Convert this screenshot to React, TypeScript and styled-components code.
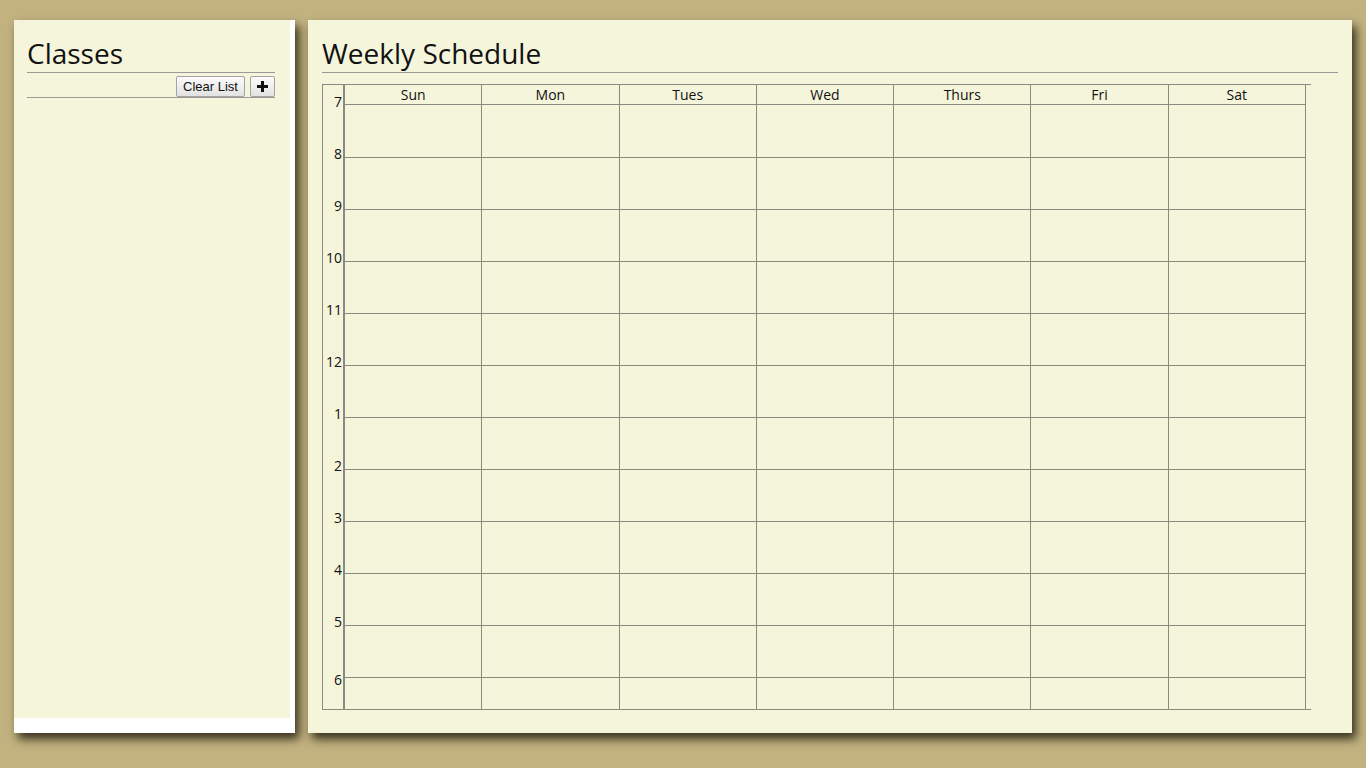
import React from "react";
import styled, { createGlobalStyle } from "styled-components";

const Global = createGlobalStyle`
  html, body { margin: 0; padding: 0; }
  body {
    background: #c2b280;
    font-family: "Open Sans", "Noto Sans", sans-serif;
    color: #111;
  }
`;

const Page = styled.div`
  display: flex;
  gap: 13px;
  padding: 20px 14px 35px 14px;
  height: 768px;
  box-sizing: border-box;
`;

const SidePanel = styled.aside`
  width: 281px;
  height: 713px;
  background: #ffffff;
  box-shadow: 4px 6px 9px rgba(20, 18, 5, 0.8);
  flex-shrink: 0;
`;

const SideInner = styled.div`
  display: flow-root;
  width: 276px;
  height: 698px;
  background: #f5f5dc;
  padding: 0 15px 0 13px;
  box-sizing: border-box;
`;

const MainPanel = styled.main`
  display: flow-root;
  flex: 1;
  height: 713px;
  background: #f5f5dc;
  box-shadow: 4px 6px 9px rgba(20, 18, 5, 0.8);
  padding: 0 14px;
  box-sizing: border-box;
`;

const Title = styled.h1`
  margin: 14px 0 0 0;
  font-family: "Open Sans", sans-serif;
  font-weight: 400;
  font-size: 28px;
  line-height: 38px;
  color: #111;
  border-bottom: 1px solid #999;
`;

const Toolbar = styled.div`
  display: flex;
  justify-content: flex-end;
  gap: 5px;
  padding-top: 3px;
  border-bottom: 1px solid #999;
`;

const Button = styled.button<{ $pad?: number }>`
  height: 21px;
  padding: 0 ${(p) => p.$pad ?? 6}px;
  font-family: "Liberation Sans", Arial, sans-serif;
  font-size: 13px;
  color: #111;
  background: linear-gradient(#fbfbfb, #e2e2e2);
  border: 1px solid #a3a3a3;
  border-radius: 2px;
  display: inline-flex;
  align-items: center;
  justify-content: center;
  cursor: pointer;
`;

const Schedule = styled.div`
  margin-top: 11px;
  width: 989px;
  height: 626px;
  box-sizing: border-box;
  display: flex;
  border-top: 1px solid #8a8a80;
  border-bottom: 1px solid #8a8a80;
  border-left: 1px solid #8a8a80;
  padding-right: 5px;
`;

const TimeCol = styled.div`
  width: 22px;
  flex-shrink: 0;
  border-right: 2px solid #8a8a80;
  padding-top: 7px;
  box-sizing: border-box;
`;

const TimeLabel = styled.div<{ $extra?: number }>`
  height: 52px;
  padding-top: ${(p) => p.$extra ?? 0}px;
  box-sizing: border-box;
  text-align: right;
  padding-right: 1px;
  font-size: 14px;
  line-height: 19px;
  color: #111;
`;

const Days = styled.div`
  flex: 1;
  display: flex;
`;

const DayCol = styled.div`
  flex: 1;
  min-width: 0;
  display: flex;
  flex-direction: column;
  border-right: 1px solid #8a8a80;
`;

const DayHead = styled.div`
  height: 20px;
  box-sizing: border-box;
  border-bottom: 1px solid #8a8a80;
  text-align: center;
  font-size: 14px;
  line-height: 19px;
  color: #111;
`;

const Slot = styled.div<{ $h: number; $last?: boolean }>`
  height: ${(p) => p.$h}px;
  box-sizing: border-box;
  border-bottom: ${(p) => (p.$last ? "none" : "1px solid #8a8a80")};
`;

const hours = ["7", "8", "9", "10", "11", "12", "1", "2", "3", "4", "5", "6"];
const days = ["Sun", "Mon", "Tues", "Wed", "Thurs", "Fri", "Sat"];

const PlusIcon = () => (
  <svg width="11" height="11" viewBox="0 0 11 11" aria-hidden="true">
    <rect x="4" y="0" width="3" height="11" fill="#111" />
    <rect x="0" y="4" width="11" height="3" fill="#111" />
  </svg>
);

export default function App() {
  return (
    <>
      <Global />
      <Page>
        <SidePanel>
          <SideInner>
            <Title>Classes</Title>
            <Toolbar>
              <Button>Clear List</Button>
              <Button $pad={6}>
                <PlusIcon />
              </Button>
            </Toolbar>
          </SideInner>
        </SidePanel>
        <MainPanel>
          <Title>Weekly Schedule</Title>
          <Schedule>
            <TimeCol>
              {hours.map((h, i) => (
                <TimeLabel key={h} $extra={i === hours.length - 1 ? 6 : 0}>
                  {h}
                </TimeLabel>
              ))}
            </TimeCol>
            <Days>
              {days.map((d) => (
                <DayCol key={d}>
                  <DayHead>{d}</DayHead>
                  {hours.map((h, i) => (
                    <Slot
                      key={h}
                      $h={i === 0 ? 53 : i === hours.length - 1 ? 31 : 52}
                      $last={i === hours.length - 1}
                    />
                  ))}
                </DayCol>
              ))}
            </Days>
          </Schedule>
        </MainPanel>
      </Page>
    </>
  );
}
